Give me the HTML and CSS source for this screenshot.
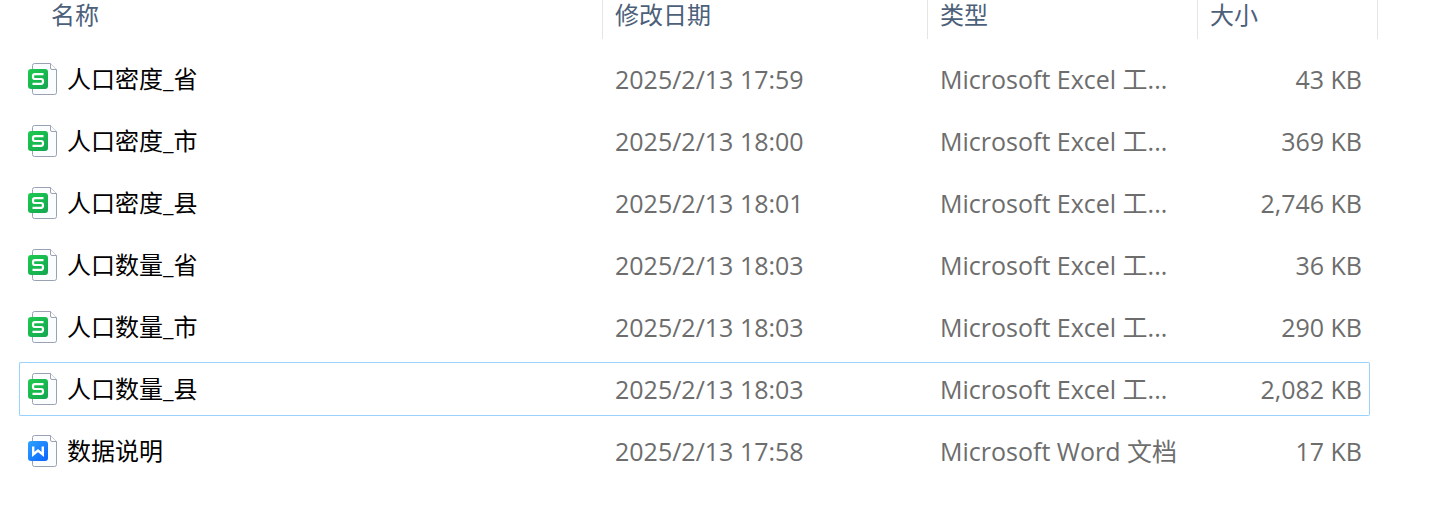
FILE: index.html
```html
<!DOCTYPE html>
<html lang="zh-CN">
<head>
  <meta charset="UTF-8">
  <meta name="viewport" content="width=device-width, initial-scale=1.0">
  <title>人口数据</title>
  <link rel="stylesheet" href="styles.css">
</head>
<body>
  <!-- Shared file icons -->
  <svg class="icon-defs" aria-hidden="true">
    <defs>
      <linearGradient id="green" x1="0" y1="0" x2="1" y2="1">
        <stop offset="0" stop-color="#1ecb4f"/>
        <stop offset="1" stop-color="#12a650"/>
      </linearGradient>
      <linearGradient id="blue" x1="0" y1="0" x2="1" y2="1">
        <stop offset="0" stop-color="#2ea3ff"/>
        <stop offset="1" stop-color="#0a63ff"/>
      </linearGradient>
      <symbol id="page" viewBox="0 0 30 32">
        <path d="M6.500 .5H22.500L28.500 6.500V29.500a2 2 0 0 1-2 2H6.500a2 2 0 0 1-2-2V2.500a2 2 0 0 1 2-2Z" fill="#fbfcfe" stroke="#9aa1b4"/>
        <path d="M22.500 .5V5a1.500 1.500 0 0 0 1.500 1.500H28.500" fill="#fff" stroke="#9aa1b4"/>
      </symbol>
      <symbol id="sheet" viewBox="0 0 30 32">
        <use href="#page" width="30" height="32"/>
        <rect x="0" y="6" width="20" height="20" rx="3" fill="url(#green)"/>
        <path d="M15.500 11.200H7a2 2 0 0 0-2 2V14a2 2 0 0 0 2 2H13a2 2 0 0 1 2 2V18.800a2 2 0 0 1-2 2H4.500" fill="none" stroke="#fff" stroke-width="2.2"/>
      </symbol>
      <symbol id="doc" viewBox="0 0 30 32">
        <use href="#page" width="30" height="32"/>
        <rect x="0" y="6" width="20" height="20" rx="3" fill="url(#blue)"/>
        <path d="M5.200 11.500V19.500L10 15.500L14.800 19.500V11.500" fill="none" stroke="#fff" stroke-width="2.400"/>
      </symbol>
    </defs>
  </svg>

  <table class="file-list">
    <thead>
      <tr>
        <th class="col-name"><span>名称</span></th>
        <th class="col-date"><span>修改日期</span></th>
        <th class="col-type"><span>类型</span></th>
        <th class="col-size"><span>大小</span></th>
      </tr>
    </thead>
    <tbody>
      <tr>
        <td><a class="file" href="#"><svg class="icon"><use href="#sheet"/></svg>人口密度_省</a></td>
        <td>2025/2/13 17:59</td>
        <td>Microsoft Excel 工...</td>
        <td class="size">43 KB</td>
      </tr>
      <tr>
        <td><a class="file" href="#"><svg class="icon"><use href="#sheet"/></svg>人口密度_市</a></td>
        <td>2025/2/13 18:00</td>
        <td>Microsoft Excel 工...</td>
        <td class="size">369 KB</td>
      </tr>
      <tr>
        <td><a class="file" href="#"><svg class="icon"><use href="#sheet"/></svg>人口密度_县</a></td>
        <td>2025/2/13 18:01</td>
        <td>Microsoft Excel 工...</td>
        <td class="size">2,746 KB</td>
      </tr>
      <tr>
        <td><a class="file" href="#"><svg class="icon"><use href="#sheet"/></svg>人口数量_省</a></td>
        <td>2025/2/13 18:03</td>
        <td>Microsoft Excel 工...</td>
        <td class="size">36 KB</td>
      </tr>
      <tr>
        <td><a class="file" href="#"><svg class="icon"><use href="#sheet"/></svg>人口数量_市</a></td>
        <td>2025/2/13 18:03</td>
        <td>Microsoft Excel 工...</td>
        <td class="size">290 KB</td>
      </tr>
      <tr class="focused">
        <td><a class="file" href="#"><svg class="icon"><use href="#sheet"/></svg>人口数量_县</a></td>
        <td>2025/2/13 18:03</td>
        <td>Microsoft Excel 工...</td>
        <td class="size">2,082 KB</td>
      </tr>
      <tr>
        <td><a class="file" href="#"><svg class="icon"><use href="#doc"/></svg>数据说明</a></td>
        <td>2025/2/13 17:58</td>
        <td>Microsoft Word 文档</td>
        <td class="size">17 KB</td>
      </tr>
    </tbody>
  </table>
</body>
</html>
```
FILE: styles.css
```css
body {
  margin: 0;
  padding: 0 66px 0 19px;
  background: #fff;
  font-family: "Open Sans", "Noto Sans CJK SC", sans-serif;
  font-size: 24px;
  color: #6d6d6d;
}

.icon-defs {
  position: absolute;
  width: 0;
  height: 0;
}

.file-list {
  width: 100%;
  margin-top: -8px;
  table-layout: fixed;
  border-collapse: separate;
  border-spacing: 0 8px;
}

/* Column headers */
th {
  height: 44px;
  padding: 0;
  vertical-align: top;
  text-align: left;
  font-weight: normal;
  color: #4c607a;
}

th span {
  display: block;
  box-sizing: border-box;
  height: 39px;
  padding-left: 12px;
  line-height: 30px;
  border-right: 1px solid #e5e5e5;
}

.col-name span {
  padding-left: 32px;
}

.col-date {
  width: 325px;
}

.col-type {
  width: 270px;
}

.col-size {
  width: 172px;
}

.col-size span {
  margin-right: -8px;
}

/* File rows */
td {
  box-sizing: border-box;
  height: 54px;
  padding: 0 0 0 12px;
  border: 1px solid transparent;
  border-width: 1px 0;
  font-size: 25px;
  line-height: 32px;
  white-space: nowrap;
}

td:first-child {
  padding-left: 8px;
  border-left-width: 1px;
  border-radius: 2px 0 0 2px;
}

td:last-child {
  padding-right: 7px;
  border-right-width: 1px;
  border-radius: 0 2px 2px 0;
}

.focused td {
  border-color: #99d1ff;
}

.size {
  text-align: right;
}

.file {
  display: flex;
  align-items: center;
  gap: 9px;
  font-size: 24px;
  color: #000;
  text-decoration: none;
}

.icon {
  width: 30px;
  height: 32px;
}
```
